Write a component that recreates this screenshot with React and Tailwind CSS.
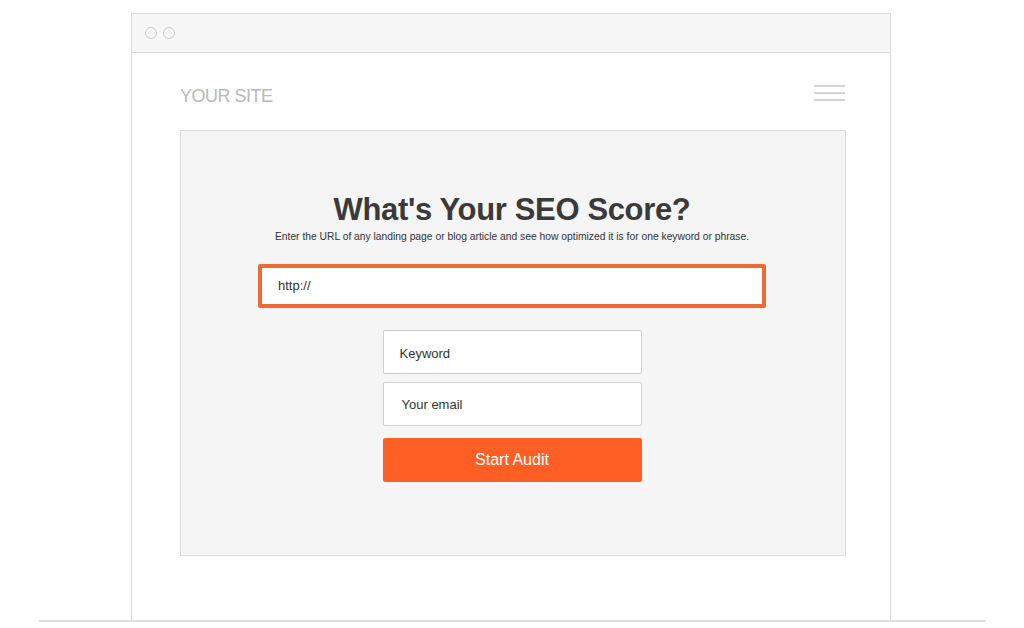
export default function App() {
  const font = { fontFamily: '"Liberation Sans", Arial, sans-serif' };
  return (
    <div className="w-[1024px] h-[628px] bg-white overflow-hidden" style={font}>
      <div className="ml-[131px] mt-[13px] w-[760px] h-[607px] border-x border-t border-[#dcdcdc] flex flex-col">
        {/* browser bar */}
        <div className="h-[39px] bg-[#f7f7f7] border-b border-[#d6d6d6] flex items-center gap-[6px] pl-[13px]">
          <span className="w-[12px] h-[12px] rounded-full border border-[#c8c8c8]" />
          <span className="w-[12px] h-[12px] rounded-full border border-[#c8c8c8]" />
        </div>

        <div className="pl-[48px] pr-[44px]">
          {/* site header */}
          <div className="h-[77px] flex items-center justify-between">
            <span className="text-[18px] text-[#b8b8b8] tracking-[-0.5px] mt-[10px]">YOUR SITE</span>
            <div className="flex flex-col gap-[5px] mr-[1px] mt-[2px]">
              <span className="block w-[31px] h-[2px] bg-[#d4d4d4]" />
              <span className="block w-[31px] h-[2px] bg-[#d4d4d4]" />
              <span className="block w-[31px] h-[2px] bg-[#d4d4d4]" />
            </div>
          </div>

          {/* form panel */}
          <div className="w-[666px] h-[426px] bg-[#f5f5f5] border border-[#dcdcdc] flex flex-col items-center pt-[61px] pr-[2px]">
            <h1 className="text-[31px] leading-[36px] font-bold text-[#3a3a3a] tracking-[-0.35px]">What's Your SEO Score?</h1>
            <p className="text-[10.3px] leading-[12px] text-[#333] mt-[3px]">
              Enter the URL of any landing page or blog article and see how optimized it is for one keyword or phrase.
            </p>
            <div className="mt-[21px] w-[508px] h-[44px] border-[4px] border-[#ee6a33] bg-white rounded-[2px] flex items-center pl-[16px] text-[13px] text-[#333]">
              http://
            </div>
            <div className="mt-[22px] w-[259px] flex flex-col gap-[8px]">
              <div className="h-[44px] bg-white border border-[#cfcfcf] rounded-[2px] flex items-center pl-[16px] pt-[3px] text-[13px] text-[#333]">
                Keyword
              </div>
              <div className="h-[44px] bg-white border border-[#cfcfcf] rounded-[2px] flex items-center pl-[18px] pt-[2px] text-[13px] text-[#333]">
                Your email
              </div>
              <div className="mt-[4px] h-[44px] bg-[#ff5f24] rounded-[2px] flex items-center justify-center text-[16px] text-white">
                Start Audit
              </div>
            </div>
          </div>
        </div>
      </div>
      <div className="ml-[39px] w-[947px] h-[2px] bg-[#dedede]" />
    </div>
  );
}
